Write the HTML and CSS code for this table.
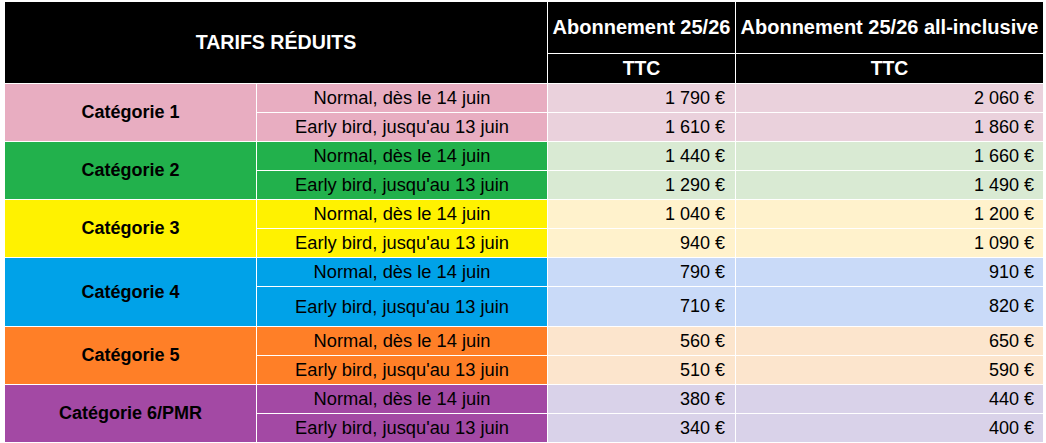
FILE: index.html
```html
<!DOCTYPE html>
<html lang="fr">
<head>
<meta charset="utf-8">
<title>Tarifs réduits</title>
<link rel="stylesheet" href="styles.css">
</head>
<body>
<table class="tarifs">
  <colgroup>
    <col class="c-cat">
    <col class="c-type">
    <col class="c-abo">
    <col class="c-all">
  </colgroup>
  <thead>
    <tr class="h1">
      <th colspan="2" rowspan="2" class="title">TARIFS RÉDUITS</th>
      <th class="abo">Abonnement 25/26</th>
      <th class="abo last">Abonnement 25/26 all-inclusive</th>
    </tr>
    <tr class="h2">
      <th>TTC</th>
      <th class="last">TTC</th>
    </tr>
  </thead>
  <tbody class="cat1">
    <tr><td rowspan="2" class="cat">Catégorie 1</td><td class="type">Normal, dès le 14 juin</td><td class="price">1 790 €</td><td class="price last">2 060 €</td></tr>
    <tr><td class="type">Early bird, jusqu'au 13 juin</td><td class="price">1 610 €</td><td class="price last">1 860 €</td></tr>
  </tbody>
  <tbody class="cat2">
    <tr><td rowspan="2" class="cat">Catégorie 2</td><td class="type">Normal, dès le 14 juin</td><td class="price">1 440 €</td><td class="price last">1 660 €</td></tr>
    <tr><td class="type">Early bird, jusqu'au 13 juin</td><td class="price">1 290 €</td><td class="price last">1 490 €</td></tr>
  </tbody>
  <tbody class="cat3">
    <tr><td rowspan="2" class="cat">Catégorie 3</td><td class="type">Normal, dès le 14 juin</td><td class="price">1 040 €</td><td class="price last">1 200 €</td></tr>
    <tr><td class="type">Early bird, jusqu'au 13 juin</td><td class="price">940 €</td><td class="price last">1 090 €</td></tr>
  </tbody>
  <tbody class="cat4">
    <tr><td rowspan="2" class="cat">Catégorie 4</td><td class="type">Normal, dès le 14 juin</td><td class="price">790 €</td><td class="price last">910 €</td></tr>
    <tr class="tall"><td class="type">Early bird, jusqu'au 13 juin</td><td class="price">710 €</td><td class="price last">820 €</td></tr>
  </tbody>
  <tbody class="cat5">
    <tr><td rowspan="2" class="cat">Catégorie 5</td><td class="type">Normal, dès le 14 juin</td><td class="price">560 €</td><td class="price last">650 €</td></tr>
    <tr><td class="type">Early bird, jusqu'au 13 juin</td><td class="price">510 €</td><td class="price last">590 €</td></tr>
  </tbody>
  <tbody class="cat6">
    <tr><td rowspan="2" class="cat">Catégorie 6/PMR</td><td class="type">Normal, dès le 14 juin</td><td class="price">380 €</td><td class="price last">440 €</td></tr>
    <tr><td class="type">Early bird, jusqu'au 13 juin</td><td class="price">340 €</td><td class="price last">400 €</td></tr>
  </tbody>
</table>
</body>
</html>
```
FILE: styles.css
```css
html, body {
  margin: 0;
  padding: 0;
  background: #ffffff;
}

body {
  padding: 2px 0 0 5px;
  font-family: "Liberation Sans", Arial, sans-serif;
  color: #000000;
}

.tarifs {
  table-layout: fixed;
  border-collapse: separate;
  border-spacing: 0;
  width: 1038px;
  font-size: 18px;
}

.c-cat { width: 252px; }
.c-type { width: 291px; }
.c-abo { width: 188px; }
.c-all { width: 307px; }

.tarifs th,
.tarifs td {
  padding: 0;
  border-right: 1px solid #ffffff;
  border-bottom: 1px solid #ffffff;
  vertical-align: middle;
  white-space: nowrap;
  overflow: hidden;
  box-sizing: border-box;
}

.tarifs .last {
  border-right: 0;
}

.tarifs th {
  background: #000000;
  color: #ffffff;
  font-weight: bold;
  font-size: 19.4px;
  text-align: center;
}

.tarifs th.abo {
  font-size: 20px;
}

.tarifs th.title {
  font-size: 19.6px;
}

.h1 { height: 52px; }
.h2 { height: 30px; }

.tarifs tbody tr { height: 29px; }
.tarifs tbody tr.tall { height: 40px; }

.cat {
  font-weight: bold;
  text-align: center;
}

.type {
  text-align: center;
  font-size: 18.3px;
}

.price {
  text-align: right;
  padding-right: 10px !important;
}

.price.last {
  padding-right: 9px !important;
}

.cat1 .cat, .cat1 .type { background: #e8adc1; }
.cat1 .price { background: #ead1dc; }

.cat2 .cat, .cat2 .type { background: #22b14c; }
.cat2 .price { background: #d9ead3; }

.cat3 .cat, .cat3 .type { background: #fff200; }
.cat3 .price { background: #fff2cc; }

.cat4 .cat, .cat4 .type { background: #00a2e8; }
.cat4 .price { background: #c9daf8; }

.cat5 .cat, .cat5 .type { background: #ff7f27; }
.cat5 .price { background: #fce5cd; }

.cat6 .cat, .cat6 .type { background: #a349a4; }
.cat6 .price { background: #d9d2e9; }
```
